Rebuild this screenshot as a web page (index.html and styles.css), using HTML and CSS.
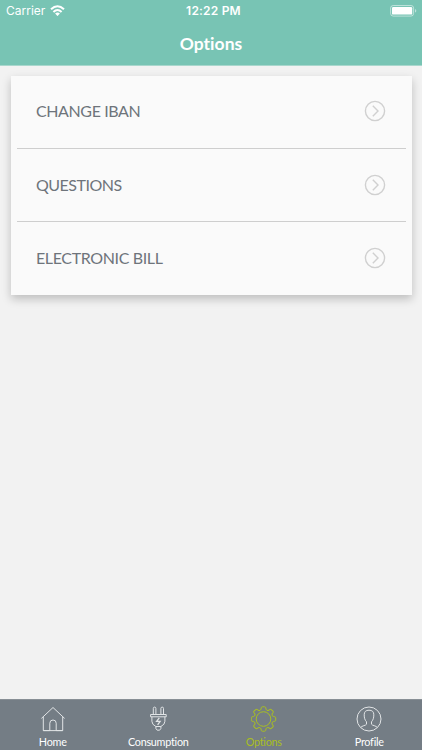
FILE: index.html
```html
<!DOCTYPE html>
<html lang="en">
<head>
<meta charset="utf-8">
<title>Options</title>
<link rel="stylesheet" href="styles.css">
</head>
<body>
<div class="app">
  <header class="header">
    <div class="status">
      <div class="carrier"><span>Carrier</span>
        <svg class="wifi" viewBox="0 0 14 11" width="15" height="11.5"><g fill="none" stroke="#fff" stroke-width="2"><path d="M.8 4.1Q7-1.7 13.2 4.1"/><path d="M3.1 6.6Q7 3 10.9 6.6"/></g><path d="M4.7 8.2Q7 6.3 9.3 8.2L7 10.6Z" fill="#fff"/></svg>
      </div>
      <div class="time">12:22 PM</div>
      <svg class="battery" viewBox="0 0 27 12" width="27" height="12"><rect x=".6" y=".5" width="23" height="10.6" rx="2.6" fill="none" stroke="#fff" stroke-opacity=".5"/><rect x="2" y="2" width="20.2" height="7.6" rx="1.2" fill="#fff"/><path d="M25 4v3.6q1.3-.4 1.3-1.8T25 4Z" fill="#fff" fill-opacity=".5"/></svg>
    </div>
    <h1 class="title">Options</h1>
  </header>
  <main class="main">
    <ul class="card">
      <li class="row"><span class="label iban">CHANGE IBAN</span><svg class="arrow" viewBox="0 0 22 22"><circle cx="11" cy="11" r="9.6"/><path d="M8.8 5.8 14 11l-5.2 5.2"/></svg></li>
      <li class="row"><span class="label questions">QUESTIONS</span><svg class="arrow" viewBox="0 0 22 22"><circle cx="11" cy="11" r="9.6"/><path d="M8.8 5.8 14 11l-5.2 5.2"/></svg></li>
      <li class="row"><span class="label bill">ELECTRONIC BILL</span><svg class="arrow" viewBox="0 0 22 22"><circle cx="11" cy="11" r="9.6"/><path d="M8.8 5.8 14 11l-5.2 5.2"/></svg></li>
    </ul>
  </main>
  <nav class="tabs">
    <div class="tab"><svg class="icon" viewBox="-13 -13 26 26"><path d="M-11.6-.6 0-11.5 11.6-.6M-9.7-2V11.6H-3.2V4.2a3.2 3.2 0 0 1 6.4 0v7.4H9.7V-2M-9.7 11.6H9.7"/></svg><span class="home">Home</span></div>
    <div class="tab"><svg class="icon" viewBox="-13.4 -13 26 26"><path d="M-5.1-4.5v-6.1a1.3 1.3 0 0 1 2.6 0v6.1M2.5-4.5v-6.1a1.3 1.3 0 0 1 2.6 0v6.1M-7.8-4.5H7.8v2.3H-7.8zM-6.5-2.2v4.5q0 3.3 4 5.2h5q4-1.9 4-5.2v-4.5M-2.5 7.5v2L-1.2 11.2h2.4L2.5 9.5v-2"/><path class="bolt" d="M.9-1.2-1.8 2.4H1.7L-.8 5.8"/></svg><span class="consumption">Consumption</span></div>
    <div class="tab active"><svg class="icon" viewBox="-12.5 -13 26 26"><defs><path id="tooth" d="M-3.67-8.87Q-2.8-8.7-2.5-9.8L-2.2-11.4Q-2-12.2-1.2-12.2H1.2Q2-12.2 2.2-11.4L2.5-9.8Q2.8-8.7 3.67-8.87"/></defs><circle r="7.3"/><use href="#tooth"/><use href="#tooth" transform="rotate(45)"/><use href="#tooth" transform="rotate(90)"/><use href="#tooth" transform="rotate(135)"/><use href="#tooth" transform="rotate(180)"/><use href="#tooth" transform="rotate(225)"/><use href="#tooth" transform="rotate(270)"/><use href="#tooth" transform="rotate(315)"/></svg><span class="options">Options</span></div>
    <div class="tab"><svg class="icon" viewBox="-13 -13 26 26"><circle r="12"/><path d="M-8.4 8.6C-7.2 6.6-3 6.6-2.5 5.2V2.8C-4.2 1-4.8-1.2-4.8-4.2Q-4.8-8.8 0-8.8T4.8-4.2C4.8-1.2 4.2 1 2.5 2.8V5.2C3 6.6 7.2 6.6 8.4 8.6"/></svg><span class="profile">Profile</span></div>
  </nav>
</div>
</body>
</html>
```

FILE: styles.css
```css
* { box-sizing: border-box; }
body { margin: 0; font-family: Lato, sans-serif; font-variant-ligatures: none; }
.app { width: 422px; height: 750px; display: flex; flex-direction: column; background: #f2f2f2; }
.header { height: 66px; background: #78c4b4; color: #fff; border-bottom: 1px solid #a9d7cd; }
.status { height: 21px; padding: 0 5px 0 6px; display: grid; grid-template-columns: 1fr auto 1fr; align-items: center; font-family: Inter, sans-serif; }
.carrier { display: flex; align-items: center; gap: 5px; font-size: 12px; }
.time { font-size: 12px; font-weight: 600; letter-spacing: .2px; padding-left: 4px; }
.battery { justify-self: end; }
.title { margin: 0; font-size: 17.5px; line-height: 45px; font-weight: 700; text-align: center; letter-spacing: .05px; }
.main { flex: 1; padding: 10px 10.5px 0; }
.card { list-style: none; margin: 0; padding: 0 6px; width: 401px; height: 218.5px; background: #fafafa; box-shadow: 0 4px 9px rgba(0, 0, 0, .22); }
.row { height: 73px; padding: 0 19.5px 2px; display: flex; align-items: center; justify-content: space-between; border-bottom: 1px solid #cecece; }
.row + .row { padding-bottom: 1px; }
.row:last-child { border: 0; padding-bottom: 2px; }
.label { font-size: 16px; line-height: 20px; color: #6e747b; white-space: nowrap; }
.iban { letter-spacing: -.4px; }
.questions { letter-spacing: -.5px; }
.bill { letter-spacing: -.37px; }
.arrow { width: 22px; height: 22px; fill: none; stroke: #d0d0d0; stroke-width: 1.4; }
.tabs { height: 51px; background: #747d85; display: grid; grid-template-columns: repeat(4, 1fr); color: #fff; border-top: 1px solid #888f95; }
.tab { display: flex; flex-direction: column; align-items: center; padding-top: 6px; font-size: 10.8px; line-height: 16px; white-space: nowrap; }
.tab span { margin-top: 2px; letter-spacing: -.25px; }
.icon { width: 26px; height: 26px; fill: none; stroke: #e1e4e6; stroke-width: 1; }
.bolt { stroke-width: 1.3; }
.active { color: #a9bf22; }
.active .icon { stroke: #a9bf22; }
```
